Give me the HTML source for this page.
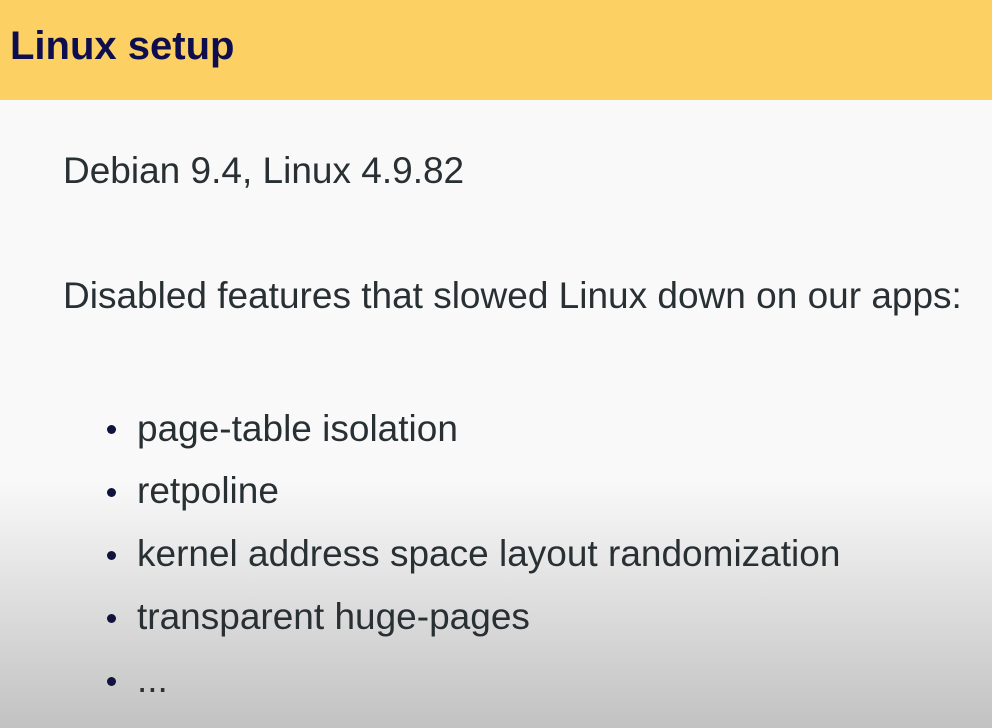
<!DOCTYPE html>
<html><head><meta charset="utf-8"><style>
html,body{margin:0;padding:0;}
body{width:992px;height:728px;overflow:hidden;position:relative;font-family:"Liberation Sans",Arial,sans-serif;
background:linear-gradient(to bottom,#f9f9f9 0px,#f9f9f9 480px,#e6e6e6 565px,#d4d4d4 645px,#c2c2c2 728px);}
.hdr{position:absolute;left:0;top:0;width:992px;height:100px;background:#fcd063;}
.title{position:absolute;left:10px;top:23px;font-size:40px;font-weight:bold;color:#0e0e4f;line-height:46px;}
.t{position:absolute;font-size:37px;color:#283034;line-height:40px;white-space:nowrap;}
.b{position:absolute;left:107px;width:9px;height:9px;border-radius:50%;background:#12123f;}
</style></head><body>
<div class="hdr"><div class="title">Linux setup</div></div>
<div class="t" style="left:63px;top:151px">Debian 9.4, Linux 4.9.82</div>
<div class="t" style="left:63px;top:276px">Disabled features that slowed Linux down on our apps:</div>
<div class="b" style="top:425px"></div><div class="t" style="left:137px;top:409px">page-table isolation</div>
<div class="b" style="top:488px"></div><div class="t" style="left:137px;top:471px">retpoline</div>
<div class="b" style="top:551px"></div><div class="t" style="left:137px;top:534px">kernel address space layout randomization</div>
<div class="b" style="top:614px"></div><div class="t" style="left:137px;top:597px">transparent huge-pages</div>
<div class="b" style="top:677px"></div><div class="t" style="left:137px;top:660px">...</div>
</body></html>
